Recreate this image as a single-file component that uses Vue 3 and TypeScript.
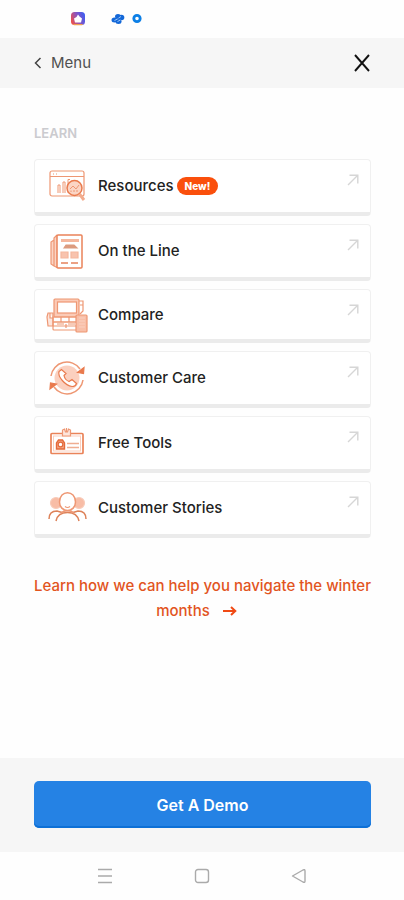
<script setup lang="ts">
type IconName = 'resources' | 'news' | 'compare' | 'care' | 'tools' | 'stories'

interface LearnItem {
  label: string
  icon: IconName
  badge?: string
  compact?: boolean
}

const items: LearnItem[] = [
  { label: 'Resources', icon: 'resources', badge: 'New!' },
  { label: 'On the Line', icon: 'news' },
  { label: 'Compare', icon: 'compare', compact: true },
  { label: 'Customer Care', icon: 'care' },
  { label: 'Free Tools', icon: 'tools' },
  { label: 'Customer Stories', icon: 'stories' },
]
</script>

<template>
  <div class="screen">
    <div class="status" aria-hidden="true">
      <svg class="status-icons" width="80" height="20" viewBox="0 0 80 20">
        <defs>
          <linearGradient id="app-tint" x1="0" y1="0.7" x2="1" y2="0.3">
            <stop offset="0" stop-color="#f0504a" />
            <stop offset="0.5" stop-color="#8a55c0" />
            <stop offset="1" stop-color="#3f5cf0" />
          </linearGradient>
        </defs>
        <rect x="1" y="2" width="14" height="13" rx="3.5" fill="url(#app-tint)" />
        <path d="M3 14h10l-1 1.3H4z" fill="#f0a050" />
        <path d="M8 4.500l1.500 2 2.500 2-1 4H5l-1-3.900L6.500 7z" fill="#fff" />
        <g fill="#1468d8">
          <ellipse cx="44.500" cy="10" rx="3" ry="2.500" />
          <ellipse cx="48" cy="6.500" rx="3" ry="2.500" />
          <ellipse cx="48.500" cy="11.500" rx="3" ry="2.500" />
          <ellipse cx="51.500" cy="7.500" rx="2.800" ry="2.800" />
        </g>
        <path d="M44.500 10.500l3-1.500M48.500 8l2.500-1.500M47.500 11.500l3-1.500" stroke="#a9d0fa" stroke-width="0.900" />
        <circle cx="67" cy="8.500" r="3.200" fill="#fff" stroke="#0c7fe6" stroke-width="2.800" />
      </svg>
    </div>

    <header class="top">
      <button class="back" type="button">
        <svg width="8" height="12" viewBox="0 0 8 12" fill="none" stroke="#444" stroke-width="1.500">
          <path d="M6.500 1L1.500 6l5 5" />
        </svg>
        <span>Menu</span>
      </button>
      <button class="close" type="button" aria-label="Close">
        <svg width="18" height="18" viewBox="0 0 18 18" fill="none" stroke="#111" stroke-width="1.900">
          <path d="M2 1l14 16M16 1L2 17" />
        </svg>
      </button>
    </header>

    <main class="content">
      <h2 class="heading">LEARN</h2>
      <nav class="cards">
        <a v-for="item in items" :key="item.label" href="#" class="card" :class="{ compact: item.compact }">
          <svg class="icon" width="42" height="40" viewBox="0 0 42 40" fill="none" stroke="#ee9773" stroke-width="1.200">
            <g v-if="item.icon === 'resources'">
              <rect x="4" y="5" width="34" height="25" rx="2" />
              <path d="M4 10.500h34M7 8h1M10 8h1" />
              <path d="M12 27V19h2v8M17 27V16h2v11M22 27V13.500h2" stroke-width="1" />
              <circle cx="28.500" cy="22" r="7.500" fill="#fbd5c5" stroke="#e97a4d" stroke-width="1.500" />
              <path d="M24 23l3-3 3 3 3-4M25 26v-1.500M28 26v-2M31 26v-2" stroke-width="1" />
              <path d="M33.500 28l4.500 6" stroke="#f3ab8c" stroke-width="3" />
            </g>
            <g v-else-if="item.icon === 'news'">
              <path d="M11 4L8 7v28l3 1.500M8 9L5 11v22l3 2" fill="#fbd5c5" />
              <rect x="11" y="4" width="25" height="33" rx="1" stroke="#ea8359" stroke-width="1.500" />
              <path d="M15 9.500h18" stroke="#f5b79d" stroke-width="3" />
              <path d="M18 17l2-3h8l3 3z" fill="#dc9b7f" stroke="#dc9b7f" />
              <path d="M15 21h7v6h-7zM25 21h7v6h-7z" fill="#f8c3ae" stroke="#f5b79d" />
              <path d="M15 32h7M25 32h7" stroke="#eba184" stroke-width="2" />
            </g>
            <g v-else-if="item.icon === 'compare'">
              <rect x="8" y="4" width="25" height="18" rx="1" fill="#fbcbb7" />
              <rect x="11.500" y="7" width="19" height="11" fill="#fff" />
              <path d="M33 6h4v10l-3 3M34 10h3" />
              <path d="M1 22l1-4h5v13H2zM4 18v5h3" fill="#fde5dc" />
              <path d="M7 22h24v5H7zM15 22v5M23 22v5" />
              <rect x="7" y="27" width="25" height="8" rx="1" />
              <path d="M7 31h25M11 29h7M22 29h7M20 29v4" />
              <rect x="30" y="20" width="11" height="17" rx="1" fill="#f8bfa8" />
              <path d="M33 23h6M33 26h6M33 29h6M33 32h6" stroke="#fbd5c5" stroke-width="0.800" />
            </g>
            <g v-else-if="item.icon === 'care'">
              <circle cx="21" cy="20" r="12.500" fill="#fbd0bf" stroke="none" />
              <path d="M5 18A16 16 0 0 1 34 11M37 22A16 16 0 0 1 8 29" stroke-width="1.500" />
              <path d="M31.500 14.500l6 1 .5-6zM10.500 26l-6-1-.5 6z" fill="#e97a4d" stroke="#e97a4d" />
              <path d="M15.500 11.500l-2.500 2c-1.500 5 6 14 13 15 2 0 4-1.200 4.500-3l-4.500-4-3 2c-2.500-1-4.500-3.500-5-6l2-2z" fill="#fff" stroke="#e97a4d" />
            </g>
            <g v-else-if="item.icon === 'tools'">
              <rect x="5" y="10.500" width="32" height="20" rx="1" stroke="#ea8359" stroke-width="1.700" />
              <rect x="7.500" y="13" width="27" height="15" stroke="#fbd0bf" stroke-width="1" />
              <path d="M16.500 7v6h8V7l-2-1-1 3h-2l-1-3z" fill="#fde5dc" />
              <path d="M20.500 5v4" />
              <path d="M10.500 26v-6l2-3h4l2 3v6z" fill="#f3a585" stroke="#e4693a" stroke-width="1.400" />
              <circle cx="14.500" cy="21.500" r="2.300" fill="#fff" stroke="#e4693a" />
              <path d="M21 20.500h12M21 24.500h12" stroke="#efad91" stroke-width="1.700" />
            </g>
            <g v-else>
              <circle cx="10" cy="15" r="5.500" fill="#f8bda6" stroke="#f8cbb9" />
              <circle cx="33" cy="15" r="5.500" fill="#f8bda6" stroke="#f8cbb9" />
              <path d="M13.500 14c0-12.500 16-12.500 16 0 0 5-3.500 8.500-8 8.500s-8-3.500-8-8.500z" fill="#fff" stroke-width="1.500" />
              <path d="M19 18.500c1.500 1.200 3.500 1.200 5 0" />
              <path d="M3 31c0-5 3-8 8-8l5 1.500M40 31c0-5-3-8-8-8l-5 1.500M10 33c1-5 5-8.500 11.500-8.500S32 28 33 33" stroke="#dd8259" stroke-width="1.500" />
              <path d="M15 25c3-3 10-3 13 0" stroke-width="1.500" />
            </g>
          </svg>
          <span class="label">{{ item.label }}</span>
          <span v-if="item.badge" class="badge">{{ item.badge }}</span>
          <svg class="corner" width="12" height="12" viewBox="0 0 12 12" fill="none" stroke="#d6d6d6" stroke-width="1.400">
            <path d="M1 11L10.500 1.500M2.500 1.200h8.300v8.300" />
          </svg>
        </a>
      </nav>

      <a class="promo" href="#">
        Learn how we can help you navigate the winter months
        <svg class="arrow" width="14" height="10" viewBox="0 0 14 10" fill="none" stroke="#f04a14" stroke-width="2">
          <path d="M0 5h12M8 1l4.300 4L8 9" />
        </svg>
      </a>
    </main>

    <footer class="cta">
      <button class="demo" type="button">Get A Demo</button>
    </footer>

    <div class="system">
      <button type="button" aria-label="Recent apps">
        <svg width="16" height="16" viewBox="0 0 16 16" fill="none" stroke="#aaa" stroke-width="1.300">
          <path d="M1 1.500h14M1 8h14M1 14.500h14" />
        </svg>
      </button>
      <button type="button" aria-label="Home">
        <svg width="16" height="16" viewBox="0 0 16 16" fill="none" stroke="#aaa" stroke-width="1.400">
          <rect x="1.500" y="1.500" width="13" height="13" rx="2.500" />
        </svg>
      </button>
      <button type="button" aria-label="Back">
        <svg width="16" height="16" viewBox="0 0 16 16" fill="none" stroke="#aaa" stroke-width="1.400" stroke-linejoin="round">
          <path d="M1.500 8L12 2q2-1 2 1v10q0 2-2 1z" />
        </svg>
      </button>
    </div>
  </div>
</template>

<style>
body {
  margin: 0;
  background: #fff;
}
</style>

<style scoped>
.screen {
  display: flex;
  flex-direction: column;
  min-height: 100vh;
  background: #fefefe;
  color: #222;
  font-family: Inter, 'Liberation Sans', sans-serif;
}

button {
  border: 0;
  padding: 0;
  background: none;
  font-family: inherit;
  cursor: pointer;
}

svg {
  display: block;
  flex: none;
}

a {
  text-decoration: none;
}

.status {
  height: 38px;
  box-sizing: border-box;
  padding: 10px 0 0 70px;
}

.top {
  display: flex;
  align-items: center;
  justify-content: space-between;
  height: 50px;
  padding: 0 33px 0 34px;
  background: #f6f6f6;
}

.back {
  display: flex;
  align-items: center;
  gap: 9px;
  color: #505050;
  font-size: 15px;
  line-height: 20px;
}

.content {
  flex: 1;
  padding: 36px 33px 24px 34px;
}

.heading {
  margin: 0 0 17px;
  color: #cbcbcf;
  font-size: 13px;
  font-weight: 600;
  line-height: 18px;
}

.cards {
  display: flex;
  flex-direction: column;
  gap: 8px;
}

.card {
  display: flex;
  align-items: center;
  height: 57px;
  box-sizing: border-box;
  padding: 0 11px;
  border: 1px solid #f0f0f0;
  border-bottom: 4px solid #ebebeb;
  border-radius: 4px;
  background: #fff;
  color: #222;
}

.card.compact {
  height: 54px;
}

.label {
  margin-left: 10px;
  font-size: 15px;
  font-weight: 500;
  line-height: 20px;
}

.badge {
  margin-left: 3px;
  padding: 0 8px;
  border-radius: 9px;
  background: #fa4f0c;
  color: #fff;
  font-size: 10px;
  font-weight: 800;
  line-height: 18px;
}

.corner {
  align-self: flex-start;
  margin: 14px 0 0 auto;
}

.promo {
  display: block;
  margin-top: 35px;
  color: #e2551f;
  font-size: 15px;
  font-weight: 500;
  line-height: 25px;
  text-align: center;
}

.arrow {
  display: inline-block;
  margin: 0 12px 0 9px;
}

.cta {
  padding: 23px 33px 24px 34px;
  background: #f6f6f6;
}

.demo {
  display: block;
  width: 100%;
  height: 47px;
  border-radius: 5px;
  background: #2582e4;
  box-shadow: inset 0 -2px #0d70d6;
  color: #fff;
  font-size: 16px;
  font-weight: 600;
}

.system {
  display: flex;
  align-items: center;
  justify-content: center;
  gap: 81px;
  height: 48px;
}
</style>
